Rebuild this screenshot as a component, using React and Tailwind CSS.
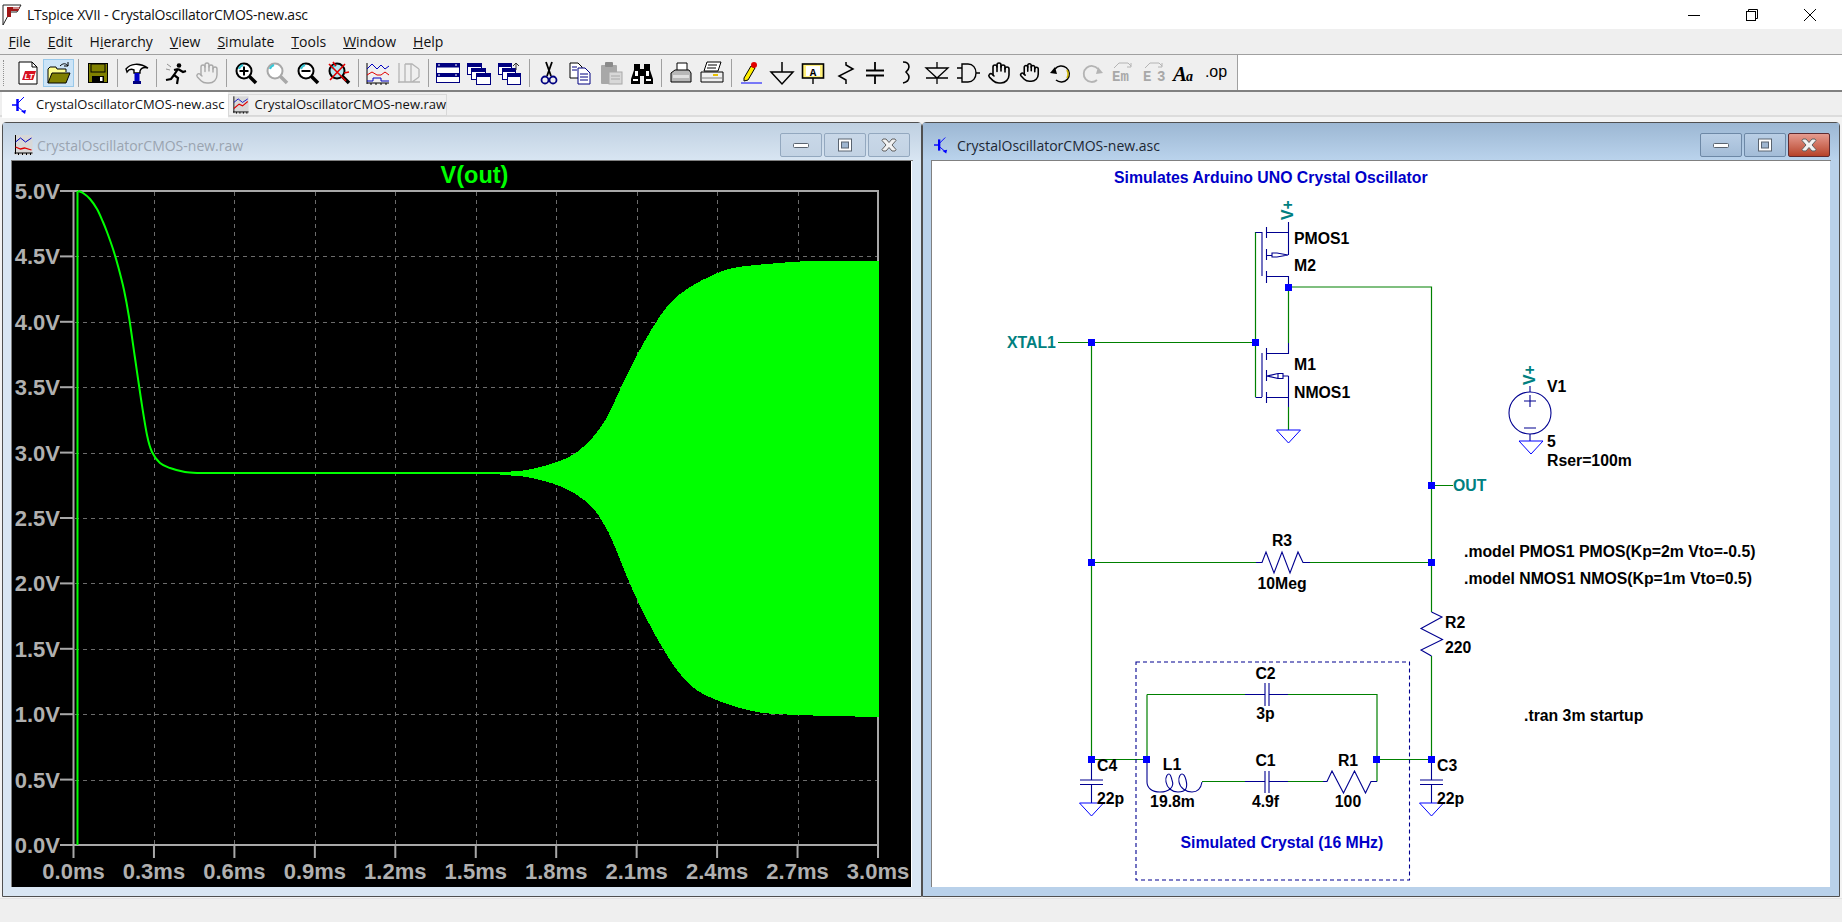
import { Hand } from 'lucide-react';

// small curve helper, catmull-rom through the measured points
const smooth = (pts) => {
  let d = `M${pts[0][0]} ${pts[0][1]}`;
  for (let i = 0; i < pts.length - 1; i++) {
    const p0 = pts[i - 1] || pts[i];
    const p1 = pts[i];
    const p2 = pts[i + 1];
    const p3 = pts[i + 2] || p2;
    const c1x = p1[0] + (p2[0] - p0[0]) / 6;
    const c1y = p1[1] + (p2[1] - p0[1]) / 6;
    const c2x = p2[0] - (p3[0] - p1[0]) / 6;
    const c2y = p2[1] - (p3[1] - p1[1]) / 6;
    d += `C${c1x} ${c1y} ${c2x} ${c2y} ${p2[0]} ${p2[1]}`;
  }
  return d;
};

const decay = [[78, 191], [83, 193], [90, 199], [97, 209], [103, 222], [107, 232], [113, 249], [118, 266], [124, 290], [129, 317], [135, 358], [141, 399], [147, 435], [152, 452], [160, 463], [170, 468], [185, 472], [200, 473]];
const upper = [[500, 472], [527, 470], [557, 462], [577, 452], [593, 437], [607, 417], [623, 383], [637, 355], [653, 327], [670, 303], [690, 287], [713, 275], [733, 268], [767, 264], [813, 261], [879, 261]];
const lower = [[879, 717], [799, 715], [752, 711], [705, 695], [681, 675], [658, 640], [634, 593], [612, 540], [603, 523], [593, 508], [577, 495], [557, 485], [527, 477], [500, 475]];

const yLabels = ['5.0V', '4.5V', '4.0V', '3.5V', '3.0V', '2.5V', '2.0V', '1.5V', '1.0V', '0.5V', '0.0V'];
const xLabels = ['0.0ms', '0.3ms', '0.6ms', '0.9ms', '1.2ms', '1.5ms', '1.8ms', '2.1ms', '2.4ms', '2.7ms', '3.0ms'];

const Ico = ({ children }) => (
  <svg viewBox="0 0 24 24" className="h-6 w-6 overflow-visible" fill="none">{children}</svg>
);

const Glass = ({ color = '#000', fill = '#fff', children }) => (
  <Ico>
    <circle cx="10" cy="10" r="7.5" fill={fill} stroke={color} strokeWidth="2" />
    <path d="M5 8a6 6 0 0 1 4-4" stroke="#35c8d8" strokeWidth="2" />
    <path d="M15.5 15.5 22 22" stroke={color} strokeWidth="3.5" />
    {children}
  </Ico>
);

const Win = ({ x, y, w, h }) => (
  <g>
    <rect x={x} y={y} width={w} height={h} fill="#fff" stroke="#000080" />
    <rect x={x} y={y} width={w} height="3.5" fill="#000080" />
  </g>
);

const tools = [
  <Ico>
    <path d="M3 1h13l5 5v17H3z" fill="#fff" stroke="#000" />
    <path d="M16 1v5h5" stroke="#000" />
    <path d="M6 19 9 10h11l-3 9z" fill="#d81020" />
    <text x="8.5" y="18" className="fill-white text-[8px] font-bold italic font-['Liberation_Sans',sans-serif]">LT</text>
  </Ico>,
  'active',
  '|',
  <Ico>
    <rect x="2.5" y="2.5" width="19" height="19" fill="#808000" stroke="#000" />
    <rect x="5" y="3" width="14" height="8" fill="#808000" stroke="#000" />
    <rect x="6" y="15" width="12" height="7" fill="#000" />
    <rect x="14" y="16" width="2.5" height="4" fill="#fff" />
  </Ico>,
  '|',
  <Ico>
    <path d="M1 8C5 3 14 1 23 7c-4-1-7 0-8 3v2H9V9C7 8 4 8 2 11z" fill="#fff" stroke="#000" strokeWidth="1.4" />
    <rect x="9.5" y="12" width="5" height="11" fill="#0000c8" />
    <rect x="8" y="20" width="8" height="3" fill="#000080" />
  </Ico>,
  '|',
  <Ico>
    <circle cx="15" cy="4.5" r="2.3" fill="#000" />
    <path d="M14 8 10 14l4 3-1 6M14 8l5 3 3-1M10 9l4-1M10 14l-3 4-5 1" stroke="#000" strokeWidth="2.2" />
    <path d="M3 3l4 3M2 8l4 1" stroke="#909090" />
  </Ico>,
  <Hand size={24} stroke="#a8a8a8" strokeWidth={1.4} />,
  '|',
  <Glass>
    <path d="M5.5 10h9M10 5.5v9" stroke="#000" strokeWidth="2" />
  </Glass>,
  <Glass color="#a8a8a8" />,
  <Glass>
    <path d="M5.5 10h9" stroke="#000" strokeWidth="2" />
  </Glass>,
  <Glass fill="#b8e8f0">
    <path d="M2 3l17 17M18 3 3 19M6 1l3 4M17 12l5-1" stroke="#e00000" strokeWidth="1.6" />
  </Glass>,
  '|',
  <Ico>
    <path d="M1 2v21M1 22h22M5 22v2M10 22v2M15 22v2M20 22v2" stroke="#000" />
    <path d="M1 8l5-5 5 5 4-4 4 4 4-3" stroke="#0000c0" />
    <path d="M1 14l5-3 5 3h4l4-3 4 3" stroke="#e00000" />
    <path d="M1 20h6v-3h8v3h8" stroke="#0000c0" />
  </Ico>,
  <Ico>
    <path d="M2 2v20M1 21h22M22 8v8M8 3h7l7 5M8 21h7l7-5M8 3v18M14 3v18" stroke="#b4b4b4" strokeWidth="1.3" />
  </Ico>,
  '|',
  <Ico>
    <rect x="0.5" y="2.5" width="23" height="19" fill="#fff" stroke="#000080" />
    <rect x="0.5" y="2.5" width="23" height="4" fill="#000080" />
    <rect x="0.5" y="12" width="23" height="4" fill="#000080" />
    <path d="M2 4h2M19 4h2M2 14h2M19 14h2" stroke="#fff" />
  </Ico>,
  <Ico>
    <Win x={0.5} y={2.5} w={14} h={11} />
    <Win x={4.5} y={7.5} w={14} h={11} />
    <Win x={9.5} y={12.5} w={14} h={11} />
  </Ico>,
  <Ico>
    <Win x={0.5} y={2.5} w={13} h={11} />
    <Win x={4.5} y={7.5} w={13} h={11} />
    <Win x={9.5} y={12.5} w={13} h={11} />
    <path d="M18 9V2M18 2l-3 3M18 2l3 3" stroke="#303030" />
  </Ico>,
  '|',
  <Ico>
    <path d="M9 1l5 14M15 1 10 15" stroke="#000" strokeWidth="1.8" />
    <circle cx="8" cy="19" r="3.5" stroke="#000080" strokeWidth="1.8" />
    <circle cx="16" cy="19" r="3.5" stroke="#000080" strokeWidth="1.8" />
  </Ico>,
  <Ico>
    <path d="M2 2h8l4 4v11H2z" fill="#fff" stroke="#000" />
    <path d="M10 7h7l5 5v11H10z" fill="#fff" stroke="#000080" />
    <path d="M12 13h8M12 16h8M12 19h8M4 6h5M4 9h5" stroke="#000080" />
  </Ico>,
  <Ico>
    <rect x="2" y="4" width="16" height="19" fill="#a8a8a8" rx="1" />
    <rect x="6" y="1" width="8" height="5" fill="#8a8a8a" rx="1" />
    <rect x="10" y="11" width="13" height="12" fill="#d8d8d8" stroke="#a8a8a8" />
    <path d="M12 15h9M12 18h9" stroke="#a8a8a8" />
  </Ico>,
  <Ico>
    <path d="M4 3h6v5h4V3h6v6l3 9v5h-9v-8h-4v8H1v-5l3-9z" fill="#000" />
    <path d="M5 10h3v5H5zM16 10h3v5h-3zM3 18h5v2H3zM16 18h5v2h-5z" fill="#fff" />
  </Ico>,
  '|',
  <Ico>
    <path d="M8 2h10v8H8z" fill="#fff" stroke="#000" />
    <path d="M2 12l4-3h14l2 3v9H2z" fill="#b8b8b8" stroke="#000" />
    <path d="M4 14h16v3H4z" fill="#e0e0e0" />
  </Ico>,
  <Ico>
    <path d="M7 1h14l-3 9H4z" fill="#fff" stroke="#000" />
    <path d="M8 4h9M7 7h9" stroke="#000" />
    <path d="M1 11h22v10H1z" fill="#f0f0f0" stroke="#000" />
    <path d="M13 14h5" stroke="#e8c000" strokeWidth="2" />
    <path d="M1 17h22" stroke="#808080" />
  </Ico>,
  '|',
  <Ico>
    <path d="M5 17 12 5l4 2-7 12-4 1z" fill="#ffee00" stroke="#000" />
    <circle cx="15" cy="4" r="3" fill="#e00000" />
    <path d="M2 22h21" stroke="#0000ff" />
  </Ico>,
  <Ico>
    <path d="M12 1v10M1 11h22L12 23z" stroke="#000" strokeWidth="1.5" />
  </Ico>,
  <Ico>
    <rect x="1.5" y="3" width="21" height="14" fill="#fff07a" stroke="#000" strokeWidth="1.6" />
    <rect x="5" y="5" width="14" height="10" fill="#fff" />
    <path d="M12 17v6" stroke="#000" strokeWidth="1.4" />
    <text x="12" y="14.5" textAnchor="middle" className="fill-black text-[11px] font-bold font-['Liberation_Mono',monospace]">A</text>
  </Ico>,
  <Ico>
    <path d="M14 1v3l7 4-14 7 7 4v4" stroke="#000" strokeWidth="1.5" />
  </Ico>,
  <Ico>
    <path d="M12 1v8M3 9.5h18M3 14.5h18M12 15v8" stroke="#000" strokeWidth="1.8" />
  </Ico>,
  <Ico>
    <path d="M9 1c5 0 6 3 6 5s-2 4-3 5c1 1 3 3 3 5s-1 5-6 6" stroke="#000" strokeWidth="1.6" />
  </Ico>,
  <Ico>
    <path d="M12 1v6M1 7h22L12 17zM1 17h22M12 17v6" stroke="#000" strokeWidth="1.3" />
  </Ico>,
  <Ico>
    <path d="M6 3h6c5 0 8 4 8 9s-3 9-8 9H6zM1 7h5M1 17h5M20 12h4" stroke="#000" strokeWidth="1.4" />
  </Ico>,
  <Hand size={24} stroke="#000" strokeWidth={1.6} />,
  <Hand size={21} stroke="#000" strokeWidth={1.8} />,
  <Ico>
    <path d="M6 8a8 8 0 1 1 1 11" stroke="#000" strokeWidth="1.5" />
    <path d="M18 9a8 8 0 0 1 0 8" stroke="#c8b000" strokeWidth="1.6" />
    <path d="M1 12l5-6 2 7z" fill="#000" />
  </Ico>,
  <Ico>
    <path d="M18 8a8 8 0 1 0-1 11" stroke="#b4b4b4" strokeWidth="1.8" />
    <path d="M23 12l-5-6-2 7z" fill="#b4b4b4" />
  </Ico>,
  <Ico>
    <path d="M3 7 8 2h9l3 3M20 2v4h-4" stroke="#b4b4b4" />
    <text x="1" y="20" className="fill-[#a8a8a8] text-[14px] font-bold font-['Liberation_Mono',monospace]">Em</text>
  </Ico>,
  <Ico>
    <path d="M3 7 8 2h9l3 3M20 2v4h-4" stroke="#b4b4b4" />
    <text x="1" y="20" className="fill-[#a8a8a8] text-[14px] font-bold font-['Liberation_Mono',monospace]">E</text>
    <text x="15" y="20" className="fill-[#a8a8a8] text-[14px] font-bold font-['Liberation_Mono',monospace]">3</text>
  </Ico>,
  <Ico>
    <text x="0" y="20" className="fill-black text-[21px] font-bold italic font-['Liberation_Serif',serif]">A</text>
    <text x="13" y="20" className="fill-black text-[14px] font-bold italic font-['Liberation_Serif',serif]">a</text>
  </Ico>,
  <Ico>
    <text x="12" y="16" textAnchor="middle" className="fill-black text-[16px] font-['Liberation_Sans',sans-serif]">.op</text>
  </Ico>
];

const OpenIcon = () => (
  <Ico>
    <path d="M1 22V8l2-2h6l1 2h9v3" fill="#ffff90" stroke="#000" />
    <path d="M1 22 5 12h18l-4 10z" fill="#808000" stroke="#000" />
    <path d="M13 5c3-3 6-3 8 0M21 1v4h-4" stroke="#000" />
  </Ico>
);

const Toolbar = () => (
  <div className="flex h-[37px] border-b-2 border-[#808080] bg-white">
    <div className="flex w-[1238px] items-center border-r border-[#a0a0a0] bg-[#efefef] pl-[3px]">
      <div className="mr-[8px] h-[26px] w-px border-l border-dotted border-[#909090]" />
      {tools.map((t, i) => {
        if (t === '|') {
          return (
            <div key={i} className="flex h-7 w-2 justify-center">
              <div className="h-full w-px bg-[#a0a0a0]" />
            </div>
          );
        }
        if (t === 'active') {
          return (
            <div key={i} className="flex h-7 w-[31px] items-center justify-center border border-[#99c9ea] bg-[#cce4f7]">
              <OpenIcon />
            </div>
          );
        }
        return <div key={i} className="flex h-7 w-[31px] items-center justify-center">{t}</div>;
      })}
    </div>
  </div>
);

const menus = [
  ['', 'F', 'ile'],
  ['', 'E', 'dit'],
  ['H', 'i', 'erarchy'],
  ['', 'V', 'iew'],
  ['', 'S', 'imulate'],
  ['', 'T', 'ools'],
  ['', 'W', 'indow'],
  ['', 'H', 'elp']
];

const Chrome = ({ children }) => (
  <svg viewBox="0 0 14 12" className="h-3 w-3.5" fill="none">{children}</svg>
);

const WinButton = ({ kind, active }) => {
  const tone = kind === 'close' && active
    ? 'border-[#5e2a30] bg-linear-to-b from-[#e59b90] to-[#b64228]'
    : active
      ? 'border-[#6d88a6] bg-linear-to-b from-[#b9cee5] to-[#a3bcd7]'
      : 'border-[#93a8bf] bg-linear-to-b from-[#c9d8e8] to-[#c2d2e3]';
  return (
    <div className={`flex h-6 w-[42px] items-center justify-center rounded-[2px] border ${tone}`}>
      <svg viewBox="0 0 18 14" className="h-[14px] w-[18px]">
        {kind === 'min' && <rect x="1.5" y="5.5" width="15" height="4" rx="1" fill="#fff" stroke="#5a6470" />}
        {kind === 'max' && (
          <g>
            <rect x="2.5" y="1" width="13" height="12" fill="#fff" stroke="#5a6470" />
            <rect x="5.5" y="4" width="7" height="6" fill="#9fb6d0" stroke="#5a6470" />
          </g>
        )}
        {kind === 'close' && (
          <path d="M3 1h3l3 3.5L12 1h3l1 1.5L12 7l4 4.500L15 13h-3L9 9.500 6 13H3l-1-1.500L6 7 2 2.500z" fill="#f2f2f2" stroke="#606060" />
        )}
      </svg>
    </div>
  );
};

const Chart = () => {
  const ys = yLabels.map((_, i) => 191 + 65.4 * i);
  const xs = xLabels.map((_, i) => 73.5 + 80.45 * i);
  return (
    <svg viewBox="12 161 899 726" className="block h-[726px] w-[899px] bg-black font-['Liberation_Sans',sans-serif] font-bold">
      {ys.slice(1, -1).map((y) => (
        <path key={y} d={`M75 ${Math.round(y) + 0.5}H877`} stroke="#6c6c6c" strokeDasharray="4 4" />
      ))}
      {xs.slice(1, -1).map((x) => (
        <path key={x} d={`M${Math.round(x) + 0.5} 192V844`} stroke="#6c6c6c" strokeDasharray="4 4" />
      ))}
      <path d="M60 191H878V845H60M73.500 191V845" fill="none" stroke="#a8a8a8" strokeWidth="2" />
      {ys.slice(1, -1).map((y) => (
        <path key={y} d={`M60 ${y}H73`} stroke="#a8a8a8" strokeWidth="2" />
      ))}
      {xs.map((x) => (
        <path key={x} d={`M${x} 845V858`} stroke="#a8a8a8" strokeWidth="2" />
      ))}
      {yLabels.map((l, i) => (
        <text key={l} x="60" y={ys[i] + 8} textAnchor="end" className="fill-[#b0b0b0] text-[22px]">{l}</text>
      ))}
      {xLabels.map((l, i) => (
        <text key={l} x={xs[i]} y="879" textAnchor="middle" className="fill-[#b0b0b0] text-[22px]">{l}</text>
      ))}
      <text x="474.500" y="183" textAnchor="middle" className="fill-[#00ff00] text-[23.500px]">V(out)</text>
      <path d="M77.500 845V191" stroke="#00ff00" strokeWidth="2" />
      <path d={`${smooth(decay)}L500 473`} fill="none" stroke="#00ff00" strokeWidth="2" />
      <path d={`${smooth(upper)}L${lower[0][0]} ${lower[0][1]}${smooth(lower).replace(/^M[^C]*/, '')}Z`} fill="#00ff00" shapeRendering="crispEdges" />
    </svg>
  );
};

const Node = ({ x, y }) => <rect x={x - 3.5} y={y - 3.5} width="7" height="7" fill="#0000ff" />;

const Ground = ({ x, y }) => (
  <path d={`M${x - 12} ${y}H${x + 12}L${x} ${y + 13}Z`} fill="none" stroke="#0000ff" />
);

const T = ({ x, y, children, anchor }) => (
  <text x={x} y={y} textAnchor={anchor} className="fill-black">{children}</text>
);

const Schematic = () => (
  <svg viewBox="932 161 898 726" className="block h-[726px] w-[898px] bg-white font-['Liberation_Sans',sans-serif] text-[15.800px] font-bold">
    {/* wires */}
    <path
      stroke="#008000"
      fill="none"
      strokeWidth="1.2"
      d="M1058 342.500H1256M1091.500 342.500V759M1255.500 232V397M1288.500 287V343M1288.500 287H1431.500V612M1288.500 407V430M1091 562.500H1256M1310 562.500H1431M1431 485.500H1453M1431.500 656V759M1091 759.500H1147M1147 694.500V759M1147 694.500H1245M1288 694.500H1377V781.500M1377 759.500H1431M1202 781.500H1245M1288 781.500H1327"
    />
    {/* symbols */}
    <path
      stroke="#000090"
      fill="none"
      strokeWidth="1.1"
      d="M1288.500 222V255M1266.500 227V238M1266.500 249V260M1266.500 271V283M1266 232.500H1288.500M1266 276.500H1288.500V287M1266 255.500H1272M1272 253V257H1277L1288 255L1277 253ZM1255.500 232.500H1262M1262 232V276M1255.500 397.500H1262M1262 353V397M1288.500 343V353.500H1266M1266.500 348V360M1266.500 370V381M1266.500 392V403M1266 397.500H1288.500V407M1288.500 376V397M1278 373.500V378.500H1283V373.500ZM1267 376L1278 373.500M1267 376L1278 378.500M1283 376H1288.500"
    />
    <Ground x={1288.500} y={430} />
    <circle cx="1530" cy="413" r="21" fill="none" stroke="#000090" strokeWidth="1.1" />
    <path stroke="#000090" strokeWidth="1.1" fill="none" d="M1530 386V392M1530 434V441M1524 401H1536M1530 395V407M1524 428H1536" />
    <Ground x={1531} y={441} />
    <path
      stroke="#000090"
      strokeWidth="1.1"
      fill="none"
      d="M1431.500 612L1442 617L1421 628.500L1442.500 639.500L1421 650L1431.500 656M1091.500 759V780M1080 780H1103M1080 784.500H1103M1091.500 784.500V803M1431.500 759V780M1420 780H1443M1420 784.500H1443M1431.500 784.500V803M1245 694.500H1265M1265 683V706M1269 683V706M1269 694.500H1288M1245 781.500H1265M1265 771V793M1269 771V793M1269 781.500H1288M1147 759V782M1323 781.500H1327L1332 771L1343.500 793L1354.500 771L1365.500 793L1371 781.500H1377"
    />
    <path d="M1256 562.500H1262L1266 552L1274 573L1282 552L1290 573L1298 552L1303 562.500H1310" fill="none" stroke="#000090" strokeWidth="1.1" />
    <path
      stroke="#000090"
      strokeWidth="1.1"
      fill="none"
      d="M1147 782C1147 788 1152 792 1160 792C1168 792 1175 788 1172 780C1171 776 1170 774 1169 774C1168 774 1165 776 1166 782C1167 788 1172 792 1178 792C1186 792 1188 788 1186 780C1185 776 1183 774 1182 774C1181 774 1178 776 1179 782C1180 788 1186 792 1192 792C1198 792 1201 788 1202 782"
    />
    <Ground x={1091.500} y={803} />
    <Ground x={1431.500} y={803} />
    <rect x="1136" y="662" width="273.500" height="218" fill="none" stroke="#000090" strokeWidth="1.1" strokeDasharray="4 3" />
    {/* junctions */}
    <Node x={1091.500} y={342.500} />
    <Node x={1255.500} y={342.500} />
    <Node x={1288.500} y={287.500} />
    <Node x={1431.500} y={485.500} />
    <Node x={1431.500} y={562.500} />
    <Node x={1091.500} y={562.500} />
    <Node x={1091.500} y={759.500} />
    <Node x={1146.500} y={759.500} />
    <Node x={1376.500} y={759.500} />
    <Node x={1431.500} y={759.500} />
    {/* text */}
    <text x="1114" y="183" className="fill-[#0000c8]">Simulates Arduino UNO Crystal Oscillator</text>
    <text x="1180.500" y="848" className="fill-[#0000c8]">Simulated Crystal (16 MHz)</text>
    <text x="1007" y="348" className="fill-[#008080]">XTAL1</text>
    <text x="1453" y="491" className="fill-[#008080]">OUT</text>
    <text transform="translate(1293 220) rotate(-90)" className="fill-[#008080]">V+</text>
    <text transform="translate(1535 385) rotate(-90)" className="fill-[#008080]">V+</text>
    <T x={1294} y={244}>PMOS1</T>
    <T x={1294} y={271}>M2</T>
    <T x={1294} y={370}>M1</T>
    <T x={1294} y={398}>NMOS1</T>
    <T x={1547} y={392}>V1</T>
    <T x={1547} y={447}>5</T>
    <T x={1547} y={466}>Rser=100m</T>
    <T x={1464} y={557}>.model PMOS1 PMOS(Kp=2m Vto=-0.5)</T>
    <T x={1464} y={584}>.model NMOS1 NMOS(Kp=1m Vto=0.5)</T>
    <T x={1282} y={546} anchor="middle">R3</T>
    <T x={1282} y={589} anchor="middle">10Meg</T>
    <T x={1445} y={628}>R2</T>
    <T x={1445} y={653}>220</T>
    <T x={1524} y={721}>.tran 3m startup</T>
    <T x={1265.500} y={679} anchor="middle">C2</T>
    <T x={1265.500} y={719} anchor="middle">3p</T>
    <T x={1265.500} y={766} anchor="middle">C1</T>
    <T x={1265.500} y={807} anchor="middle">4.9f</T>
    <T x={1348} y={766} anchor="middle">R1</T>
    <T x={1348} y={807} anchor="middle">100</T>
    <T x={1172} y={770} anchor="middle">L1</T>
    <T x={1172.500} y={807} anchor="middle">19.8m</T>
    <T x={1097} y={771}>C4</T>
    <T x={1097} y={804}>22p</T>
    <T x={1437} y={771}>C3</T>
    <T x={1437} y={804}>22p</T>
  </svg>
);

const BjtIcon = ({ className }) => (
  <svg viewBox="0 0 16 18" className={className} fill="none">
    <path d="M0 9h5" stroke="#0000ff" strokeWidth="1.5" />
    <path d="M5.500 3v12" stroke="#0000ff" strokeWidth="2.500" />
    <path d="M6 7l6-6M6 11l6 5" stroke="#0000ff" />
    <path d="M9 15l5-1-1 4z" fill="#0000ff" />
  </svg>
);

const RawIcon = ({ className, active }) => (
  <svg viewBox="0 0 18 20" className={className} fill="none">
    <rect width="18" height="20" fill="#d8d8d8" />
    <path d="M1 0v19M0 18h18M4 18v2M8 18v2M12 18v2M16 18v2" stroke="#000" />
    <path d="M1 7l5-4 5 4 6-4" stroke="#0000c0" />
    <path d={active ? 'M1 14l6-5 4 2 6-5' : 'M1 12l5 2 4-1 7 2'} stroke="#e00000" strokeWidth="1.300" />
  </svg>
);

const App = () => (
  <div className="flex h-screen w-screen flex-col overflow-hidden bg-[#f3f3f3] font-['Open_Sans',sans-serif] text-[#111]">
    <div className="flex h-[29px] items-center bg-white pl-[2px] pr-[3px]">
      <svg viewBox="0 0 20 22" className="mr-[5px] h-[22px] w-5" fill="none">
        <path d="M1 1h18l-4 7H8L1 21z" fill="#fff" stroke="#222" />
        <path d="M5 3h13l-2 4H9v6H5z" fill="#a01818" />
        <path d="M11 4h6" stroke="#fff" />
      </svg>
      <span className="text-[14px] tracking-[-0.23px]">LTspice XVII - CrystalOscillatorCMOS-new.asc</span>
      <div className="ml-auto flex">
        <div className="flex h-[29px] w-[58px] items-center justify-center">
          <Chrome><path d="M1 6.500h12" stroke="#000" /></Chrome>
        </div>
        <div className="flex h-[29px] w-[58px] items-center justify-center">
          <Chrome>
            <rect x="1.500" y="2.500" width="9" height="9" stroke="#000" />
            <path d="M3.500 2.500V.5h9v9h-2" stroke="#000" />
          </Chrome>
        </div>
        <div className="flex h-[29px] w-[58px] items-center justify-center">
          <Chrome><path d="M1 0l12 12M13 0 1 12" stroke="#000" /></Chrome>
        </div>
      </div>
    </div>

    <div className="flex h-[26px] items-center border-b border-[#a0a0a0] bg-[#efefef] text-[14px] leading-none">
      {menus.map(([a, b, c]) => (
        <span key={a + b + c} className="px-[8.500px]">{a}<u>{b}</u>{c}</span>
      ))}
    </div>

    <Toolbar />

    <div className="h-[25px] border-b-2 border-[#dcdcdc] bg-[#efefef] pl-[2px] text-[13px] whitespace-nowrap">
      <div className="flex">
        <div className="flex h-[26px] w-[226px] items-center bg-white pl-[10px]">
          <BjtIcon className="mr-2 h-[18px] w-4" />
          CrystalOscillatorCMOS-new.asc
        </div>
        <div className="mt-[2px] flex h-[22px] w-[219px] items-center border border-[#d8d8d8] bg-[#f0f0f0] pl-1">
          <RawIcon className="mr-[6px] h-5 w-4" active />
          CrystalOscillatorCMOS-new.raw
        </div>
      </div>
    </div>

    <div className="flex flex-1 flex-col pt-[5px]">
      <div className="flex pl-[2px]">
        <div className="w-[920px] rounded-t-[4px] border border-[#505050] bg-[#d9e6f3]">
          <div className="flex h-[37px] items-center bg-linear-to-b from-[#bfd0e1] to-[#d8e5f2] pl-[11px] pr-[11px] pt-[7px] text-[14px] text-[#9aa4b0]">
            <RawIcon className="mr-1 h-5 w-[19px]" />
            CrystalOscillatorCMOS-new.raw
            <div className="ml-auto flex gap-[2px]">
              <WinButton kind="min" />
              <WinButton kind="max" />
              <WinButton kind="close" />
            </div>
          </div>
          <div className="mx-2 mb-[9px] flex border-l border-t border-[#808080] pr-px">
            <Chart />
            <div className="w-px bg-white" />
          </div>
        </div>
        <div className="w-[918px] rounded-t-[4px] border border-[#505050] bg-[#b9d1ea]">
          <div className="flex h-[37px] items-center bg-linear-to-b from-[#9cb7d3] to-[#bad3ec] pl-[11px] pr-[9px] pt-[7px] text-[14px] text-[#1c2733]">
            <BjtIcon className="mr-2 h-[18px] w-[15px]" />
            CrystalOscillatorCMOS-new.asc
            <div className="ml-auto flex gap-[2px]">
              <WinButton kind="min" active />
              <WinButton kind="max" active />
              <WinButton kind="close" active />
            </div>
          </div>
          <div className="mx-2 mb-[9px] border-l border-t border-[#808080]">
            <Schematic />
          </div>
        </div>
      </div>
      <div className="mt-px flex-1 border-t border-[#e3e3e3] bg-[#efefef]" />
    </div>
  </div>
);

export default App;
